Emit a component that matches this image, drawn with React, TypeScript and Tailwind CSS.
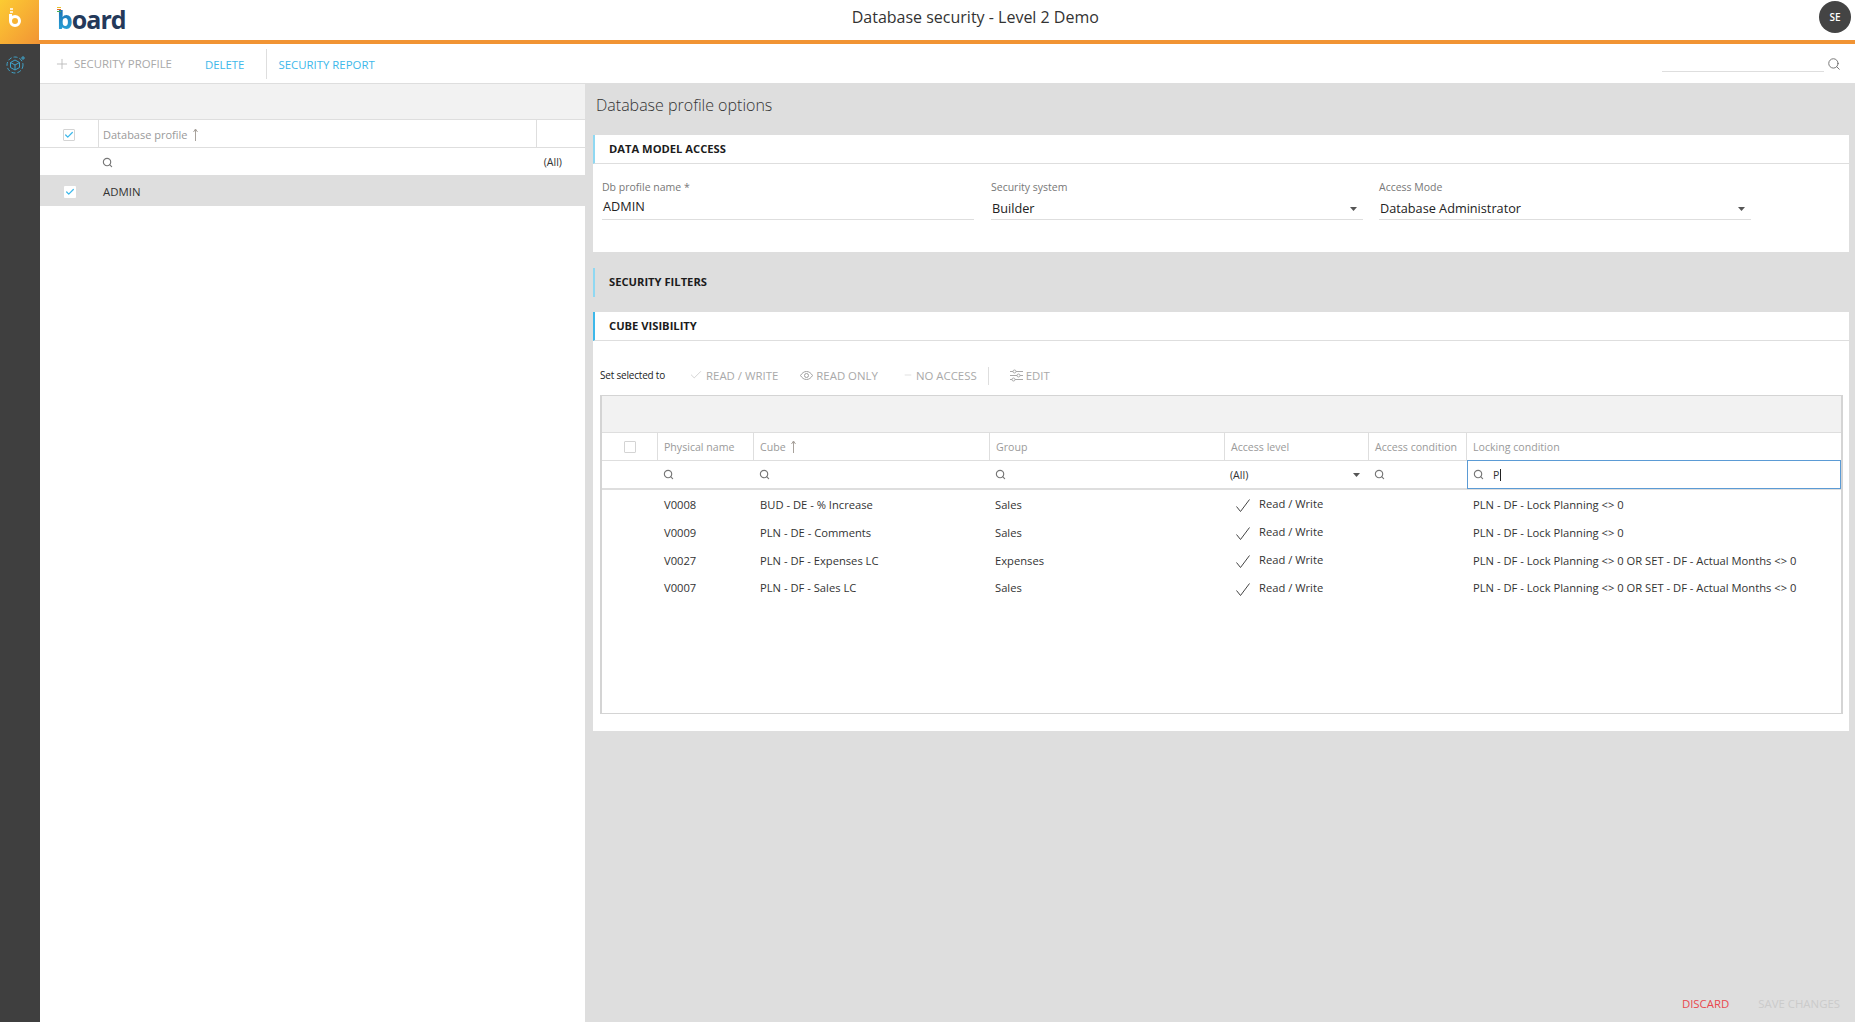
import { Check, Minus, Plus, Search } from "lucide-react";

const font = { fontFamily: '"Open Sans", sans-serif' };

const rows = [
  { name: "V0008", cube: "BUD - DE - % Increase", group: "Sales", lock: "PLN - DF - Lock Planning <> 0", h: "h-[28px]" },
  { name: "V0009", cube: "PLN - DE - Comments", group: "Sales", lock: "PLN - DF - Lock Planning <> 0", h: "h-[28px]" },
  { name: "V0027", cube: "PLN - DF - Expenses LC", group: "Expenses", lock: "PLN - DF - Lock Planning <> 0 OR SET - DF - Actual Months <> 0", h: "h-[28px]" },
  { name: "V0007", cube: "PLN - DF - Sales LC", group: "Sales", lock: "PLN - DF - Lock Planning <> 0 OR SET - DF - Actual Months <> 0", h: "h-[27px]" },
];

const gridCols = "grid grid-cols-[56px_96px_236px_235px_144px_98px_1fr]";

function SmallSearch() {
  return <Search className="w-[11px] h-[11px] text-[#777]" strokeWidth={2.5} />;
}

function SortArrow() {
  return (
    <svg width="5" height="13" viewBox="0 0 5 13" className="ml-[5px] -mt-[2px]">
      <path d="M2.500 1v12M.5 4l2-3 2 3" stroke="#a8a29c" strokeWidth="1" fill="none" />
    </svg>
  );
}

function Caret() {
  return (
    <svg width="7" height="4" viewBox="0 0 7 4">
      <path d="M0 0h7L3.500 4z" fill="#555" />
    </svg>
  );
}

function ThinCheck() {
  return (
    <svg width="14" height="13" viewBox="0 0 14 13" fill="none" stroke="#444" strokeWidth="1" className="mt-[2px]">
      <path d="M.5 7.500l4 5L13.500.5" />
    </svg>
  );
}

function BoardMark() {
  return (
    <svg width="14" height="20" viewBox="0 0 14 20" fill="none">
      <path d="M2 1h3M2 4h3" stroke="#fff" strokeWidth="1.500" />
      <circle cx="7" cy="13" r="4.500" stroke="#fff" strokeWidth="3" />
      <path d="M2.500 6v7" stroke="#fff" strokeWidth="3" />
    </svg>
  );
}

function Logo() {
  return (
    <div className="flex items-end h-[26px] ml-[18px] mt-[6px] relative">
      <div className="absolute left-0 top-[1px] w-[4px] flex flex-col gap-[1px]">
        <div className="h-[1px] bg-[#e8c32c]" />
        <div className="h-[1px] bg-[#e2662c]" />
        <div className="h-[1px] bg-[#4caf50]" />
      </div>
      <span className="text-[25px] leading-[26px] font-bold tracking-[-1px] text-[#24395a] pt-[2px]">
        <span className="bg-gradient-to-b from-[#1a5fa8] to-[#2bb0e0] bg-clip-text text-transparent">b</span>oard
      </span>
    </div>
  );
}

function CubeIcon() {
  return (
    <svg width="20" height="20" viewBox="0 0 20 20" fill="none" stroke="#3fa3c9" strokeWidth="1">
      <circle cx="9" cy="11" r="8" strokeDasharray="4 2" />
      <path d="M9 6l4.500 2.500v5L9 16l-4.500-2.500v-5zM4.500 8.500L9 11l4.500-2.500M9 11v5" />
      <path d="M17 2v4M15 4h4" />
    </svg>
  );
}

function CheckBox({ checked, bordered = true }: { checked?: boolean; bordered?: boolean }) {
  return (
    <div className={`w-[12px] h-[12px] bg-white flex items-center justify-center rounded-[1px] ${bordered ? "border border-[#d4d4d4]" : ""}`}>
      {checked && <Check className="w-[10px] h-[10px] text-[#3db8ea]" strokeWidth={3} />}
    </div>
  );
}

function SectionHeader({ title, accent, transparent }: { title: string; accent: string; transparent?: boolean }) {
  return (
    <div className={`h-[29px] flex items-center pl-[14px] border-l-[2px] ${accent} ${transparent ? "" : "bg-white border-b border-b-[#dedede]"}`}>
      <span className="text-[11.200px] font-bold text-[#1c1c1c]">{title}</span>
    </div>
  );
}

function Field({ label, value, width, select, valueTop }: { label: string; value: string; width: string; select?: boolean; valueTop: string }) {
  return (
    <div className={`${width} flex flex-col`}>
      <span className="text-[10.500px] leading-[14px] text-[#777]">{label}</span>
      <div className={`h-[26px] border-b border-[#dedede] flex items-center justify-between pr-[6px] pl-[1px] ${valueTop}`}>
        <span className="text-[12.700px] text-[#222]">{value}</span>
        {select && <Caret />}
      </div>
    </div>
  );
}

function ToolAction({ icon, label }: { icon: React.ReactNode; label: string }) {
  return (
    <div className="flex items-center gap-[3px] text-[11.400px] text-[#a9a9a9]">
      {icon}
      <span>{label}</span>
    </div>
  );
}

function Th({ label, sort, wide }: { label: string; sort?: boolean; wide?: boolean }) {
  return (
    <div className={`flex items-center pl-[6px] pt-[2px] text-[10.600px] text-[#9a9a9a] ${wide ? "" : "border-r border-[#dedede]"}`}>
      {label}
      {sort && <SortArrow />}
    </div>
  );
}

export default function App() {
  return (
    <div style={font} className="w-[1855px] h-[1022px] flex flex-col overflow-hidden bg-white">
      {/* Top bar */}
      <header className="h-[44px] shrink-0 flex border-b-[4px] border-[#f19434] relative">
        <div className="w-[39px] h-[44px] bg-gradient-to-br from-[#fccb32] to-[#f19434] flex items-start justify-center pt-[8px] pr-[9px]">
          <BoardMark />
        </div>
        <Logo />
        <div className="flex-1 flex items-center justify-center pl-[6px] pb-[7px]">
          <span className="text-[16px] text-[#333]">Database security - Level 2 Demo</span>
        </div>
        <div className="w-[32px] h-[32px] rounded-full bg-[#444] text-white text-[10px] font-semibold flex items-center justify-center mt-[1px] mr-[4px]">
          SE
        </div>
      </header>

      <div className="flex-1 flex min-h-0">
        <aside className="w-[40px] shrink-0 bg-[#3f3f3f] pl-[6px] pt-[10px]">
          <CubeIcon />
        </aside>

        <div className="flex-1 flex flex-col min-w-0">
          {/* Toolbar */}
          <div className="h-[40px] shrink-0 flex items-center border-b border-[#dedede] pl-[14px] pr-[14px]">
            <Plus className="w-[16px] h-[16px] text-[#b5b5b5]" strokeWidth={1.25} />
            <span className="ml-[4px] text-[11.400px] text-[#a9a9a9]">SECURITY PROFILE</span>
            <span className="ml-[33px] pt-[2px] text-[11.400px] text-[#3db8ea]">DELETE</span>
            <div className="ml-[22px] w-px h-[30px] bg-[#dedede]" />
            <span className="ml-[11px] pt-[2px] text-[11.400px] text-[#3db8ea]">SECURITY REPORT</span>
            <div className="ml-auto flex items-center gap-[3px]">
              <div className="w-[162px] h-[21px] mb-[5px] border-b border-[#dedede]" />
              <Search className="w-[14px] h-[14px] text-[#666]" strokeWidth={1.5} />
            </div>
          </div>

          <div className="flex-1 flex min-h-0">
            {/* Left list */}
            <div className="w-[545px] shrink-0 flex flex-col bg-white">
              <div className="h-[36px] bg-[#f2f2f2] border-b border-[#dedede]" />
              <div className="h-[28px] flex border-b border-[#dedede]">
                <div className="w-[59px] flex items-center justify-center border-r border-[#dedede] pt-[2px]">
                  <CheckBox checked />
                </div>
                <div className="w-[438px] flex items-center pl-[4px] pt-[3px] text-[11px] text-[#9a9a9a] border-r border-[#dedede]">
                  Database profile
                  <SortArrow />
                </div>
              </div>
              <div className="h-[27px] flex items-center justify-between pl-[62px] pr-[23px] pt-[2px]">
                <SmallSearch />
                <span className="text-[10.600px] text-[#333]">(All)</span>
              </div>
              <div className="h-[31px] bg-[#dedede] flex items-center">
                <div className="w-[59px] flex justify-center pt-[2px]">
                  <CheckBox checked bordered={false} />
                </div>
                <span className="pl-[4px] pt-[3px] text-[11.400px] text-[#333]">ADMIN</span>
              </div>
            </div>

            {/* Main panel */}
            <main className="flex-1 min-w-0 bg-[#dedede] flex flex-col pl-[8px] pr-[6px] relative">
              <div className="h-[51px] flex items-center pl-[3px] pb-[9px] text-[16px] font-light text-[#333]">
                Database profile options
              </div>

              <div className="bg-white h-[117px]">
                <SectionHeader title="DATA MODEL ACCESS" accent="border-l-[#8fd8f2]" />
                <div className="flex pl-[9px] pt-[16px]">
                  <Field label="Db profile name *" value="ADMIN" width="w-[372px] mr-[17px]" valueTop="pt-[1px]" />
                  <Field label="Security system" value="Builder" width="w-[372px] mr-[16px]" valueTop="pt-[4px]" select />
                  <Field label="Access Mode" value="Database Administrator" width="w-[372px]" valueTop="pt-[4px]" select />
                </div>
              </div>

              <div className="mt-[16px]">
                <SectionHeader title="SECURITY FILTERS" accent="border-l-[#8fd8f2]" transparent />
              </div>

              <div className="mt-[15px] bg-white h-[419px] flex flex-col">
                <SectionHeader title="CUBE VISIBILITY" accent="border-l-[#3db8ea]" />

                <div className="h-[54px] flex items-center pl-[7px] pt-[15px]">
                  <span className="text-[10px] text-[#222] tracking-[-0.2px]">Set selected to</span>
                  <div className="ml-[24px] flex items-center">
                    <ToolAction icon={<Check className="w-[14px] h-[14px] text-[#b5b5b5]" strokeWidth={1} />} label="READ / WRITE" />
                    <div className="ml-[22px]">
                      <ToolAction
                        icon={
                          <svg width="13" height="9" viewBox="0 0 13 9" fill="none" stroke="#a0a0a0" strokeWidth="1">
                            <path d="M.5 4.500C2 2 4 .5 6.500.5S11 2 12.500 4.500C11 7 9 8.500 6.500 8.500S2 7 .5 4.500z" />
                            <circle cx="6.500" cy="4.500" r="2" />
                          </svg>
                        }
                        label="READ ONLY"
                      />
                    </div>
                    <div className="ml-[25px]">
                      <ToolAction icon={<Minus className="w-[10px] h-[10px] text-[#b5b5b5]" strokeWidth={1} />} label="NO ACCESS" />
                    </div>
                    <div className="ml-[11px] w-px h-[18px] bg-[#dedede]" />
                    <div className="ml-[21px]">
                      <ToolAction
                        icon={
                          <svg width="13" height="13" viewBox="0 0 13 13" fill="none" stroke="#a8a8a8" strokeWidth="1">
                            <path d="M0 2.500h3M6 2.500h7M0 6.500h7M10 6.500h3M0 10.500h2M5 10.500h8" />
                            <circle cx="4.500" cy="2.500" r="1.500" />
                            <circle cx="8.500" cy="6.500" r="1.500" />
                            <circle cx="3.500" cy="10.500" r="1.500" />
                          </svg>
                        }
                        label="EDIT"
                      />
                    </div>
                  </div>
                </div>

                {/* Cube table */}
                <div className="ml-[7px] mr-[6px] h-[319px] border border-[#d4d4d4] border-l-[2px] border-r-[2px] flex flex-col">
                  <div className="h-[37px] shrink-0 bg-[#f2f2f2] border-b border-[#dedede]" />
                  <div className={`${gridCols} h-[28px] shrink-0 border-b border-[#dedede]`}>
                    <div className="flex items-center justify-center border-r border-[#dedede]">
                      <CheckBox />
                    </div>
                    <Th label="Physical name" />
                    <Th label="Cube" sort />
                    <Th label="Group" />
                    <Th label="Access level" />
                    <Th label="Access condition" />
                    <Th label="Locking condition" wide />
                  </div>
                  <div className={`${gridCols} h-[29px] shrink-0 border-b-[2px] border-[#dedede]`}>
                    <div />
                    <div className="flex items-center pl-[5px]"><SmallSearch /></div>
                    <div className="flex items-center pl-[5px]"><SmallSearch /></div>
                    <div className="flex items-center pl-[5px]"><SmallSearch /></div>
                    <div className="flex items-center justify-between pl-[5px] pr-[9px]">
                      <span className="text-[10.600px] text-[#333] pt-[2px]">(All)</span>
                      <Caret />
                    </div>
                    <div className="flex items-center pl-[5px]"><SmallSearch /></div>
                    <div className="flex items-center pl-[5px] border border-[#5b9bd5] -my-[1px]">
                      <SmallSearch />
                      <span className="ml-[9px] text-[10.600px] text-[#333] border-r border-[#222] pr-[1px] leading-[12px]">P</span>
                    </div>
                  </div>
                  <div className="pt-[1px]">
                    {rows.map((r) => (
                      <div key={r.name} className={`${gridCols} ${r.h} items-center text-[11.200px] text-[#333]`}>
                        <div />
                        <div className="pl-[6px]">{r.name}</div>
                        <div className="pl-[6px]">{r.cube}</div>
                        <div className="pl-[5px]">{r.group}</div>
                        <div className="pl-[11px] flex items-center gap-[9px]">
                          <ThinCheck />
                          <span className="-mt-[1px]">Read / Write</span>
                        </div>
                        <div />
                        <div className="pl-[6px]">{r.lock}</div>
                      </div>
                    ))}
                  </div>
                </div>
              </div>

              <div className="absolute right-[15px] bottom-[10px] flex gap-[29px] text-[11.400px]">
                <span className="text-[#e9484f]">DISCARD</span>
                <span className="text-[#cbcbcb]">SAVE CHANGES</span>
              </div>
            </main>
          </div>
        </div>
      </div>
    </div>
  );
}
